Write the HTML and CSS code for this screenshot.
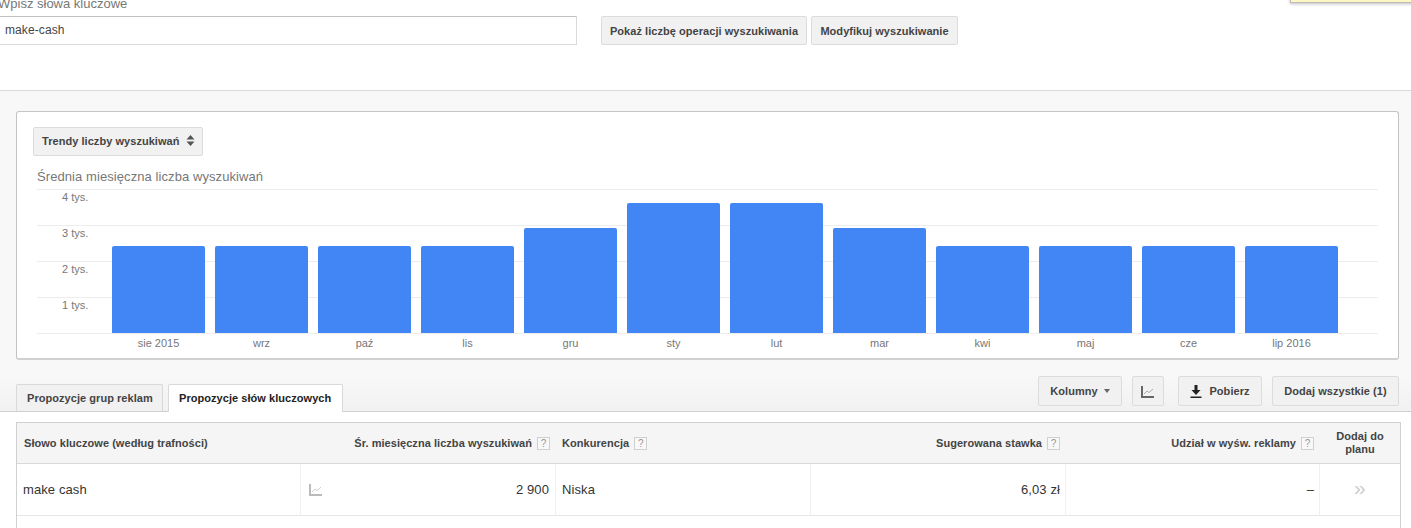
FILE: index.html
```html
<!DOCTYPE html>
<html lang="pl">
<head>
<meta charset="utf-8">
<title>Planer słów kluczowych</title>
<link rel="stylesheet" href="styles.css">
</head>
<body>
<div class="note"></div>
<header class="search">
  <div class="search-label">Wpisz słowa kluczowe</div>
  <div class="search-row">
    <div class="search-input">make-cash</div>
    <button class="btn btn-first">Pokaż liczbę operacji wyszukiwania</button>
    <button class="btn">Modyfikuj wyszukiwanie</button>
  </div>
</header>
<section class="panel">
  <div class="card">
    <button class="btn select">Trendy liczby wyszukiwań
      <svg class="updown" width="9" height="13" viewBox="0 0 9 13"><path d="M4.5 1 8.5 5.5H.5zM4.5 12 .5 7.5h8z" fill="#555"/></svg>
    </button>
    <div class="chart-title">Średnia miesięczna liczba wyszukiwań</div>
    <div class="plot">
      <div class="grid">
        <div class="grid-row">4 tys.</div>
        <div class="grid-row">3 tys.</div>
        <div class="grid-row">2 tys.</div>
        <div class="grid-row">1 tys.</div>
      </div>
      <div class="bars">
        <div class="bar h87"></div><div class="bar h87"></div><div class="bar h87"></div><div class="bar h87"></div>
        <div class="bar h105"></div><div class="bar h130"></div><div class="bar h130"></div><div class="bar h105"></div>
        <div class="bar h87"></div><div class="bar h87"></div><div class="bar h87"></div><div class="bar h87"></div>
      </div>
    </div>
    <div class="months">
      <span>sie 2015</span><span>wrz</span><span>paź</span><span>lis</span><span>gru</span><span>sty</span>
      <span>lut</span><span>mar</span><span>kwi</span><span>maj</span><span>cze</span><span>lip 2016</span>
    </div>
  </div>
  <div class="toolbar">
    <div class="tabs">
      <div class="tab">Propozycje grup reklam</div>
      <div class="tab tab-active">Propozycje słów kluczowych</div>
    </div>
    <div class="actions">
      <button class="btn tool kolumny">Kolumny <span class="caret"></span></button>
      <button class="btn tool chart-btn">
        <svg width="13" height="12" viewBox="0 0 13 12"><path d="M1 0v11h12" fill="none" stroke="#666" stroke-width="2"/><path d="M3 8l3-3 2 1.5L12 3" fill="none" stroke="#aaa" stroke-width="1"/></svg>
      </button>
      <button class="btn tool pobierz">
        <svg width="12" height="13" viewBox="0 0 12 13"><path d="M4.5 0h3v5h3L6 10 1.500 5h3zM.5 11.500h11V13H.5z" fill="#222"/></svg>
        Pobierz
      </button>
      <button class="btn tool dodaj">Dodaj wszystkie (1)</button>
    </div>
  </div>
</section>
<main class="results">
  <div class="table">
    <div class="th">Słowo kluczowe (według trafności)</div>
    <div class="th right">Śr. miesięczna liczba wyszukiwań <span class="help">?</span></div>
    <div class="th">Konkurencja <span class="help">?</span></div>
    <div class="th right">Sugerowana stawka <span class="help">?</span></div>
    <div class="th right">Udział w wyśw. reklamy <span class="help">?</span></div>
    <div class="th center">Dodaj do planu</div>

    <div class="td keyword">make cash</div>
    <div class="td searches">
      <svg width="13" height="12" viewBox="0 0 13 12"><path d="M1 0v11h12" fill="none" stroke="#bbb" stroke-width="2"/><path d="M3 8l3-3 2 1.5L12 3" fill="none" stroke="#ccc" stroke-width="1"/></svg>
      <span>2 900</span>
    </div>
    <div class="td comp">Niska</div>
    <div class="td right">6,03 zł</div>
    <div class="td right">–</div>
    <div class="td add">»</div>
  </div>
</main>
</body>
</html>
```
FILE: styles.css
```css
* { box-sizing: border-box; }
html, body { margin: 0; height: 528px; overflow: hidden; background: #fff; }
body { font-family: "Liberation Sans", Arial, sans-serif; color: #333; position: relative; }

.note {
  position: absolute; top: -8px; right: -4px; width: 125px; height: 11px;
  background: #fff8c4; border: 1px solid #bbb; box-shadow: 0 1px 3px rgba(0,0,0,.25);
}

.search { height: 95px; margin-top: -5px; }
.search-label { height: 21px; line-height: 17px; font-size: 13px; color: #777; margin-left: -2px; }
.search-row { display: flex; align-items: stretch; height: 29px; }
.search-input {
  width: 582px; margin-left: -5px; padding-left: 9px; line-height: 26px; font-size: 12px; letter-spacing: .1px; color: #444;
  border: 1px solid #d9d9d9; border-top-color: #c0c0c0; background: #fff;
}
.btn {
  font-family: inherit; font-size: 11px; font-weight: 700; letter-spacing: .05px; color: #444;
  background: #f1f1f1; border: 1px solid #dcdcdc; border-radius: 2px; padding: 0 8px; margin: 0;
  white-space: nowrap;
}
.search-row .btn { margin-left: 4px; width: 147px; padding: 0; }
.search-row .btn-first { margin-left: 24px; width: 206px; }

.panel {
  height: 322px; padding: 20px 12px 0 16px; background: linear-gradient(#f8f8f8 0, #f8f8f8 285px, #f1f1f1 100%);
  border-top: 1px solid #d9d9d9; border-bottom: 1px solid #d0d0d0;
  display: flex; flex-direction: column;
}
.card {
  flex: none; width: 1383px; height: 249px; background: #fff; border: 1px solid #c4c4c4; border-bottom: 2px solid #d0d0d0;
  border-radius: 3px; padding: 15px 20px 0 16px;
}
.select { height: 29px; width: 170px; display: flex; align-items: center; justify-content: space-between; padding: 0 7px 2px 8px; }
.chart-title { font-size: 13px; letter-spacing: .08px; color: #777; line-height: 16px; margin: 13px 0 0 4px; height: 20px; }
.plot { display: grid; margin-left: 4px; width: 1341px; height: 145px; }
.grid, .bars { grid-area: 1 / 1; }
.grid-row {
  height: 36px; border-top: 1px solid #ededed; width: 100%; font-size: 11px; color: #777;
  line-height: 14px; padding: 0 0 0 25px;
}
.grid-row:last-child { height: 37px; border-bottom: 1px solid #ededed; }
.bars { display: flex; align-items: flex-end; gap: 10px; padding: 0 0 1px 75px; }
.bar { width: 93px; background: #4285f4; border-radius: 2px 2px 0 0; }
.h87 { height: 87px; }
.h105 { height: 105px; }
.h130 { height: 130px; }
.months { display: flex; gap: 10px; margin-left: 79px; }
.months span { width: 93px; text-align: center; font-size: 11px; color: #777; line-height: 18px; }

.toolbar { display: flex; justify-content: space-between; margin-top: 16px; flex: 1; }
.tabs { display: flex; align-items: flex-end; gap: 5px; margin-top: 8px; height: 27px; }
.tab {
  width: 147px; height: 27px; padding: 0 10px; line-height: 26px; font-size: 11px; font-weight: 700; letter-spacing: .05px; color: #444;
  background: #f1f1f1; border: 1px solid #d9d9d9; border-bottom: 0; border-radius: 2px 2px 0 0; white-space: nowrap;
}
.tab-active { width: 175px; background: #fff; color: #222; height: 28px; margin-bottom: -1px; }
.actions { display: flex; gap: 10px; height: 30px; }
.tool { display: flex; align-items: center; justify-content: center; gap: 6px; padding: 0; }
.kolumny { width: 84px; }
.chart-btn { width: 32px; margin-right: 4px; padding: 1px 1px 0 0; }
.pobierz { width: 84px; gap: 7px; }
.dodaj { width: 127px; }
.caret { width: 0; height: 0; border: 3.5px solid transparent; border-top: 4px solid #666; border-bottom: 0; }

.results { padding: 10px 0 0 16px; }
.table {
  display: grid; width: 1385px; height: 120px; grid-template-columns: 284px 255px 255px 255px 254px 1fr; grid-template-rows: 41px 52px 1fr;
  border: 1px solid #d0d0d0; border-bottom: 0;
}
.th {
  background: #f5f5f5; border-bottom: 1px solid #d9d9d9; font-size: 11px; font-weight: 700; letter-spacing: .05px; color: #444;
  display: flex; align-items: center; padding: 0 6px; gap: 5px; line-height: 13px;
}
.th:first-child { padding-left: 7px; }
.right { justify-content: flex-end; }
.center { justify-content: center; text-align: center; padding: 0 10px; }
.help {
  width: 13px; height: 13px; border: 1px solid #d0d0d0; background: #f8f8f8; color: #999; font-weight: 400; font-size: 10px;
  display: inline-flex; align-items: center; justify-content: center; letter-spacing: 0;
}
.td {
  font-size: 13px; letter-spacing: .1px; color: #333; display: flex; align-items: center; padding: 0 5px; height: 52px;
  border-bottom: 1px solid #e6e6e6; border-right: 1px solid #f0f0f0;
}
.td:last-child { border-right: 0; }
.keyword { padding-left: 6px; }
.searches { justify-content: space-between; padding-left: 8px; padding-right: 6px; }
.comp { padding-left: 6px; }
.add { justify-content: center; font-size: 21px; line-height: 20px; padding-bottom: 4px; color: #ccc; font-weight: 400; }
```
